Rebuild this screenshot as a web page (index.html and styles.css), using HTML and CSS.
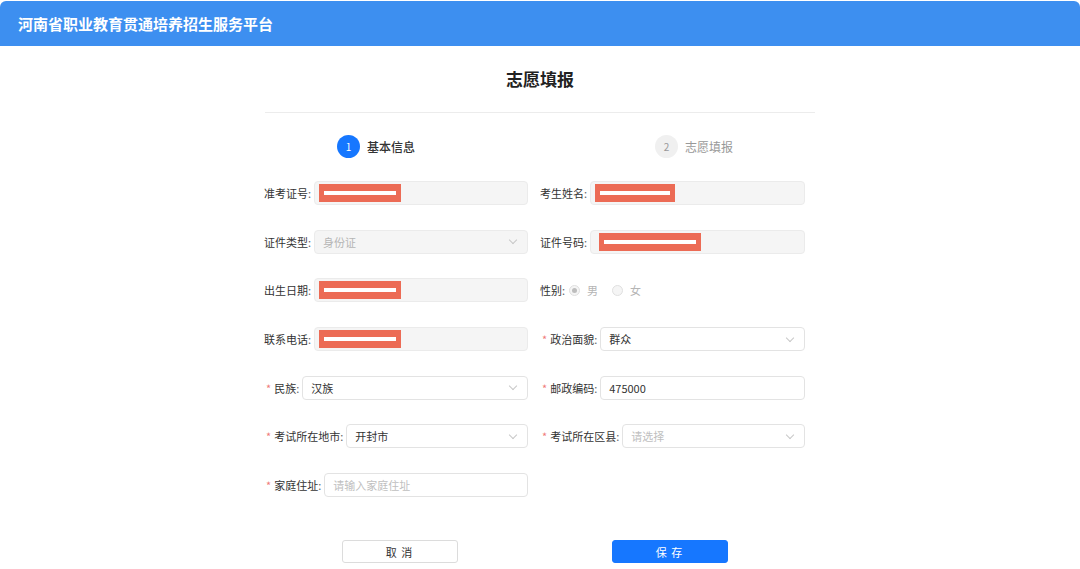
FILE: index.html
```html
<!DOCTYPE html>
<html lang="zh-CN">
<head>
    <meta charset="UTF-8">
    <meta name="viewport" content="width=device-width, initial-scale=1.0">
    <title>河南省职业教育贯通培养招生服务平台</title>
    <link rel="stylesheet" href="styles.css">
</head>
<body>
    <div class="topbar">河南省职业教育贯通培养招生服务平台</div>

    <div class="page">
        <h1 class="title">志愿填报</h1>
        <div class="divider"></div>

        <!-- Steps -->
        <div class="steps">
            <div class="step active">
                <span class="step-num">1</span>
                <span class="step-text">基本信息</span>
            </div>
            <div class="step">
                <span class="step-num">2</span>
                <span class="step-text">志愿填报</span>
            </div>
        </div>
    </div>

    <div class="form">
        <div class="item">
            <label class="label">准考证号</label>
            <div class="field disabled"><span class="mask w82"></span></div>
        </div>
        <div class="item">
            <label class="label">考生姓名</label>
            <div class="field disabled"><span class="mask w80"></span></div>
        </div>

        <div class="item">
            <label class="label">证件类型</label>
            <div class="field disabled select"><span class="muted">身份证</span><span class="arrow"></span></div>
        </div>
        <div class="item">
            <label class="label">证件号码</label>
            <div class="field disabled"><span class="mask w102"></span></div>
        </div>

        <div class="item">
            <label class="label">出生日期</label>
            <div class="field disabled"><span class="mask w82"></span></div>
        </div>
        <div class="item">
            <label class="label">性别</label>
            <div class="radios">
                <span class="radio checked"></span><span class="muted">男</span>
                <span class="radio"></span><span class="muted">女</span>
            </div>
        </div>

        <div class="item">
            <label class="label">联系电话</label>
            <div class="field disabled"><span class="mask w82"></span></div>
        </div>
        <div class="item">
            <label class="label"><i class="req">*</i>政治面貌</label>
            <div class="field select"><span>群众</span><span class="arrow"></span></div>
        </div>

        <div class="item">
            <label class="label"><i class="req">*</i>民族</label>
            <div class="field select"><span>汉族</span><span class="arrow"></span></div>
        </div>
        <div class="item">
            <label class="label"><i class="req">*</i>邮政编码</label>
            <div class="field"><span>475000</span></div>
        </div>

        <div class="item">
            <label class="label"><i class="req">*</i>考试所在地市</label>
            <div class="field select"><span>开封市</span><span class="arrow"></span></div>
        </div>
        <div class="item">
            <label class="label"><i class="req">*</i>考试所在区县</label>
            <div class="field select"><span class="placeholder">请选择</span><span class="arrow"></span></div>
        </div>

        <div class="item">
            <label class="label"><i class="req">*</i>家庭住址</label>
            <div class="field"><span class="placeholder">请输入家庭住址</span></div>
        </div>
    </div>

    <div class="actions">
        <button class="btn">取 消</button>
        <button class="btn primary">保 存</button>
    </div>
</body>
</html>
```

FILE: styles.css
```css
/* Base */
body {
    margin: 0;
    font-family: "Noto Sans CJK SC", "Noto Sans", sans-serif;
    color: #333;
    background: #fff;
    font-size: 11px;
}

.topbar {
    height: 45px;
    margin-top: 1px;
    line-height: 45px;
    padding-left: 18px;
    background-color: #3d8ff0;
    color: #fff;
    font-size: 15px;
    font-weight: bold;
    border-radius: 6px 6px 0 0;
}

.page {
    width: 550px;
    margin: 0 auto;
}

.title {
    margin: 20px 0 0;
    text-align: center;
    font-size: 17px;
    line-height: 26px;
    color: #222;
}

.divider {
    height: 1px;
    margin-top: 20px;
    background-color: #ececec;
}

/* Steps */
.steps {
    display: flex;
    padding: 22px 0 0 72px;
}

.step {
    flex: none;
    width: 318px;
    display: flex;
    align-items: center;
}

.step-num {
    width: 23px;
    height: 23px;
    border-radius: 50%;
    background-color: #f0f0f0;
    color: #999;
    font-size: 10px;
    line-height: 23px;
    text-align: center;
    margin-right: 7px;
}

.step-text {
    font-size: 12px;
    color: #999;
}

.step.active .step-num {
    background-color: #1677ff;
    color: #fff;
}

.step.active .step-text {
    color: #333;
    font-weight: 500;
}

/* Form */
.form {
    width: 541px;
    margin: 23px 0 0 264px;
    display: grid;
    grid-template-columns: 264px 265px;
    column-gap: 12px;
    row-gap: 24.7px;
}

.item {
    display: flex;
    align-items: center;
    height: 24px;
}

.label {
    white-space: nowrap;
    color: #333;
}

.label::after {
    content: ":";
    margin: 0 3px 0 0;
    color: #666;
}

.req {
    font-style: normal;
    color: #f07a7a;
    margin: 0 3px 0 2px;
}

.field {
    flex: 1;
    height: 24px;
    box-sizing: border-box;
    border: 1px solid #e3e3e3;
    border-radius: 4px;
    padding: 0 7px 0 4px;
    display: flex;
    align-items: center;
    color: #333;
}

.field > span:first-child:not(.mask) {
    padding-left: 4px;
}

.field.disabled {
    background-color: #f5f5f5;
    border-color: #ebebeb;
}

.field.select {
    justify-content: space-between;
}

.muted {
    color: #b5b5b5;
}

.placeholder {
    color: #c0c0c0;
}

.arrow {
    width: 5px;
    height: 5px;
    border-right: 1px solid #c8c8c8;
    border-bottom: 1px solid #c8c8c8;
    transform: rotate(45deg);
    margin: 0 4px 3px 0;
}

/* Redaction blocks */
.mask {
    height: 18px;
    box-sizing: border-box;
    padding: 0 5px;
    background-color: #ec6b55;
    display: flex;
    align-items: center;
}

.mask::before {
    content: "";
    flex: 1;
    height: 4px;
    background-color: #fff;
}

.mask.w80 { width: 80px; }
.mask.w82 { width: 82px; }
.mask.w102 { width: 102px; margin-left: 4px; }

/* Radio */
.radios {
    display: flex;
    align-items: center;
}

.radio {
    width: 11px;
    height: 11px;
    box-sizing: border-box;
    border: 1px solid #e0e0e0;
    border-radius: 50%;
    background-color: #f5f5f5;
    margin: 0 7px 0 1px;
    display: flex;
    align-items: center;
    justify-content: center;
}

.radio + .muted {
    margin-right: 13px;
}

.radio.checked::after {
    content: "";
    width: 5px;
    height: 5px;
    border-radius: 50%;
    background-color: #bdbdbd;
}

/* Buttons */
.actions {
    width: 541px;
    margin: 43px 0 0 264px;
    display: flex;
    justify-content: center;
    gap: 154px;
}

.btn {
    width: 116px;
    height: 23px;
    border: 1px solid #dcdcdc;
    border-radius: 3px;
    background-color: #fff;
    color: #333;
    font-family: inherit;
    font-size: 11px;
    letter-spacing: 1px;
    cursor: pointer;
}

.btn.primary {
    background-color: #1677ff;
    border-color: #1677ff;
    color: #fff;
}
```
